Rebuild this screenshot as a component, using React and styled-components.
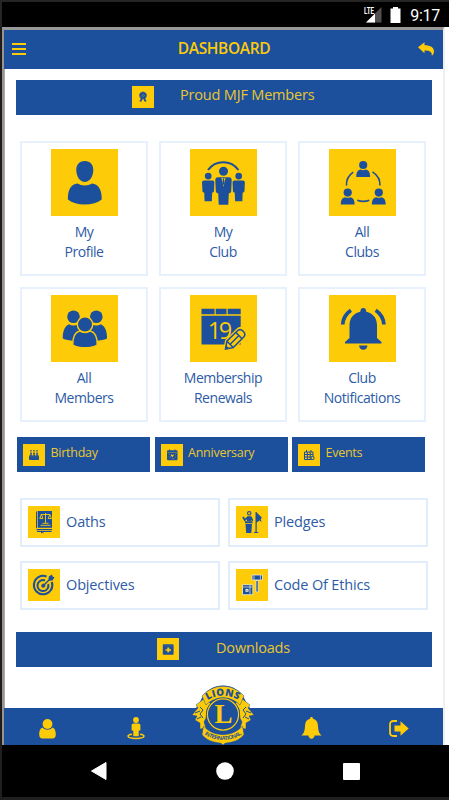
import React from "react";
import styled, { createGlobalStyle } from "styled-components";

const BLUE = "#1c4f9c";
const YELLOW = "#fdcb08";

const GlobalStyle = createGlobalStyle`
  * {
    box-sizing: border-box;
  }
  body {
    margin: 0;
    background-color: #fff;
    font-family: "Open Sans", "Noto Sans", sans-serif;
  }
`;

const ProfileIcon = () => (
  <svg viewBox="0 0 67 67" fill={BLUE}>
    <path d="M33.8 12c5.600 0 8.800 4 8.500 9.500C42 28 38.500 33 33.800 33s-8.200-5-8.500-11.500C25 16 28.200 12 33.800 12z" />
    <path d="M26.500 34.500c4.300 2.600 10.200 2.600 14.500 0 7 .6 10 7.500 9.700 16-4.200 3.300-9.900 5-16.900 5s-12.700-1.700-16.900-5c-.3-8.500 2.600-15.400 9.600-16z" />
  </svg>
);

const Person = ({ x, y, s = 1 }) => (
  <g transform={`translate(${x} ${y}) scale(${s})`}>
    <circle cx="0" cy="0" r="4.500" />
    <path d="M-5.500 6h11c1.700 0 2.800 1.200 2.700 3L7.700 20c-.2 1.500-1.200 2-2.400 2l-.5 11.500h-9.600l-.5-11.500c-1.200 0-2.200-.5-2.400-2L-8.200 9c-.1-1.800 1-3 2.700-3z" />
  </g>
);

const ClubIcon = () => (
  <svg viewBox="0 0 67 67" fill={BLUE}>
    <path d="M18 21c7.500-10.500 23-10.500 30.500 0" fill="none" stroke={BLUE} strokeWidth="2" />
    <Person x={18.2} y={27} s={0.75} />
    <Person x={48.7} y={27} s={0.75} />
    <Person x={33.5} y={22.3} />
    <path d="M31.300 28.300l2.200 9.700 2.200-9.700-1.400 1.200h-1.600z" fill={YELLOW} />
    <path d="M33 29.700h1l.6 4.500-1.100 2-1.100-2z" />
  </svg>
);

const Bust = ({ x, y }) => (
  <g transform={`translate(${x} ${y})`}>
    <circle r="4.100" />
    <path d="M-6.900 11.900c0-4.700 1.600-6.800 4.400-7.300 1.500.8 3.500.8 5 0 2.800.5 4.400 2.600 4.400 7.300z" />
  </g>
);

const ClubsIcon = () => (
  <svg viewBox="0 0 67 67" fill={BLUE}>
    <Bust x={34.2} y={16} />
    <Bust x={18.700} y={43.600} />
    <Bust x={49.800} y={43.600} />
    <g fill="none" stroke={BLUE} strokeWidth="1.600">
      <path d="M17.500 36.500c-.4-5.300 2-10 6.700-13.300" />
      <path d="M43.500 22.800c5 3.200 7.800 8 7.400 13.700" />
      <path d="M28.300 51.300c4 1.500 8 1.500 12 0" />
    </g>
  </svg>
);

const MembersIcon = () => (
  <svg viewBox="0 0 67 67" fill={BLUE}>
    <circle cx="22.500" cy="21.800" r="6.300" />
    <circle cx="45.300" cy="21.800" r="6.300" />
    <path d="M11.800 43.500c-.3-7 2-12.300 6-14.300 3 1.800 6.500 1.800 9.500 0l5 6-4 10c-6.500 1-12.500.2-16.500-1.700z" />
    <path d="M56 43.500c.3-7-2-12.300-6-14.300-3 1.800-6.500 1.800-9.500 0l-5 6 4 10c6.500 1 12.500.2 16.500-1.700z" />
    <g stroke={YELLOW} strokeWidth="1.400">
      <path d="M21.800 50c-.3-7.500 2-12.500 6.800-14 3.400 2 7.400 2 10.800 0 4.800 1.500 7.100 6.500 6.800 14-6.600 3.700-17.800 3.700-24.400 0z" />
      <circle cx="34" cy="29.500" r="7.700" />
    </g>
  </svg>
);

const RenewalIcon = () => (
  <svg viewBox="0 0 67 67" fill={BLUE}>
    <path d="M11.500 13.700h13v5.600h-13zM25.700 13.700h10.800v5.600H25.700zM37.700 13.700h13v5.600h-13zM11.500 20.800h39.200v28.700H11.500z" />
    <text x="28.700" y="43.500" textAnchor="middle" fontSize="23.500" fontWeight="400" fontFamily="Open Sans" letterSpacing="-2.500" fill={YELLOW}>
      19
    </text>
    <g transform="translate(35.500 54) rotate(-45)">
      <path d="M0 0l6.500-4.500h15.500c3 0 4 2 4 4.500s-1 4.500-4 4.500H6.500z" stroke={YELLOW} strokeWidth="4" />
      <path d="M0 0l6.500-4.500h14.500c3 0 4 2 4 4.500s-1 4.500-4 4.500H6.500zM6.500-4.500v9M19-4.500v9M7 0h12" fill={YELLOW} stroke={BLUE} strokeWidth="1.500" />
      <path d="M0 0l3-2v4z" />
    </g>
  </svg>
);

const NoticeIcon = () => (
  <svg viewBox="0 0 67 67" fill={BLUE}>
    <path d="M34.300 13c1.900 0 3 1.400 3 3.800 7 1.700 10.700 6.500 10.700 13.400V43l4.500 4v1.500H16V47l4.500-4V30.200c0-6.900 3.800-11.700 10.800-13.400 0-2.400 1.100-3.800 3-3.800zM30 50.500h8.500c-.3 2.700-1.900 4.300-4.200 4.300s-4-1.600-4.300-4.300z" />
    <g fill="none" stroke={BLUE} strokeWidth="3.700">
      <path d="M13.700 29.500c.3-6 3.200-10.800 8.200-14.300" />
      <path d="M54.900 29.500c-.3-6-3.200-10.800-8.200-14.300" />
    </g>
  </svg>
);

const RosetteIcon = () => (
  <svg viewBox="0 0 22 22" fill={BLUE}>
    <circle cx="11" cy="9.500" r="3.400" stroke={BLUE} strokeDasharray="1 .6" />
    <path d="M9.300 10.300l2.500-2.500M10.500 11.300l2.300-2.300" stroke="#9a9654" strokeWidth=".7" />
    <path d="M9 12l1.500 1-1.300 3-.9-.8-1 .2zM13 12l-1.500 1 1.300 3 .9-.8 1 .2z" />
  </svg>
);

const CakeIcon = () => (
  <svg viewBox="0 0 22 22" fill={BLUE}>
    <path d="M6 11.500h10v3.700q0 .8-.8.800H6.800q-.8 0-.8-.8zM7.300 8.500h1.500V12H7.300zM10.300 8.500h1.500V12h-1.500zM13.300 8.500h1.500V12h-1.500zM7.300 6h1.300v1.400H7.300zM10.300 6h1.300v1.400h-1.300zM13.300 6h1.300v1.400h-1.300z" />
    <path d="M6 12.300c1.500 1.500 2.500 0 3.300 0s1.800 1.500 3.400 0 2 .8 3.300 0" fill="none" stroke="#4c6a68" strokeWidth=".5" />
  </svg>
);

const DateIcon = () => (
  <svg viewBox="0 0 22 22" fill={BLUE}>
    <rect x="6" y="6.300" width="10.500" height="10" rx="1" />
    <path d="M6.500 8.500h9.500M8 10.500h1M8 13h2M14 10.500h1M14 13h1M10.500 14.700h3" stroke="#8c8d56" strokeWidth=".7" />
    <path d="M11.300 13.200l-1.400-1.700c-.4-1 .8-1.500 1.400-.5.600-1 1.800-.5 1.400.5z" fill={YELLOW} />
    <path d="M8.500 5.500v2M14 5.500v2" stroke={BLUE} />
  </svg>
);

const EventIcon = () => (
  <svg viewBox="0 0 22 22" fill="none" stroke={BLUE}>
    <path d="M6.500 8h8.500v7.500H6.500zM6.500 10.500H15M6.500 13H15M9.300 8v7.500M12.200 8v7.500M8.500 6v2M13 6v2" />
    <circle cx="14.500" cy="14" r="1.600" fill={YELLOW} />
  </svg>
);

const DownloadIcon = () => (
  <svg viewBox="0 0 22 22" fill={BLUE}>
    <rect x="5.800" y="6.200" width="10.800" height="10.600" rx=".8" />
    <path d="M6.500 7.800h9.500" stroke="#496c85" strokeWidth=".7" />
    <path d="M10.300 9.500h2v1.700h1.700v1.500h-1.700v1.500h-2v-1.500H8.500v-1.500h1.800z" fill={YELLOW} />
  </svg>
);

const OathIcon = () => (
  <svg viewBox="0 0 32 32" fill={BLUE}>
    <path d="M10 5h14v16.700H10zM8 6.500q0-1.300 1.300-1.500v16.500L8 22.300z" />
    <path d="M8.500 23.600H24M9 25.500h14.500" stroke={BLUE} strokeWidth="1.200" />
    <path d="M13 25.500v2l1.300-1 1.200 1v-2z" />
    <g fill="none" stroke={YELLOW} strokeWidth=".9">
      <path d="M17.500 7v10M12.800 8.500h9.400M13.300 8.500l-1.500 4h3.200zM21.800 8.500l-1.600 4h3.200zM14.500 17.300h6M12.500 19.300h10" />
    </g>
  </svg>
);

const TargetIcon = () => (
  <svg viewBox="0 0 32 32" fill="none" stroke={BLUE}>
    <path d="M18.500 7.500A9.200 9.200 0 1 0 23.800 13" strokeWidth="2.100" />
    <path d="M17 11.500a5.500 5.500 0 1 0 3.200 3.500" strokeWidth="2" />
    <circle cx="15.300" cy="16.700" r="1.600" fill={BLUE} />
    <path d="M15.500 16.500l9-9" strokeWidth="1.500" />
    <path d="M20.500 10.500l.3-3L24 5.500l.5 2.200 2 .5-2 3.200-3 .3z" fill={BLUE} stroke="none" />
  </svg>
);

const PledgeIcon = () => (
  <svg viewBox="0 0 32 32" fill={BLUE}>
    <path d="M9 15.300h7.500v2H9zM9.500 18h6.500l-.7 9h-5.100z" />
    <circle cx="13.200" cy="7.300" r="1.700" fill={YELLOW} stroke={BLUE} strokeWidth="1.100" />
    <path d="M7 11l1.800 3.200 3-3h3l1.800 3.600" fill="none" stroke={BLUE} strokeWidth="1.700" />
    <path d="M11 11h4v4h-4zM19.500 6h1.200v20.500h-1.200zM20.700 6.500l5.300 5.300-1.300 1.300.8 3-2-1.600-2.800 2z" />
    <path d="M18 26.500h4.200" stroke={BLUE} />
  </svg>
);

const EthicsIcon = () => (
  <svg viewBox="0 0 32 32" fill={BLUE}>
    <g stroke="#f4efd0" strokeWidth=".8">
      <path d="M16 6h10.500v5H16zM20 11.500h2.200V23H20zM6.500 15.700h10.300v10H6.500z" />
    </g>
    <path d="M7 18h9M14 16v9.500M18 6.300v4.400M24.400 6.300v4.400" stroke="#f4efd0" strokeWidth=".7" />
    <path d="M9.500 20h3v2.800h-3z" fill="#f4efd0" />
    <path d="M10.500 21h1v.8h-1z" />
  </svg>
);

const MenuIcon = () => (
  <svg width="14" height="12" viewBox="0 0 14 12" fill={YELLOW}>
    <path d="M0 0h14v2H0zM0 5h14v2H0zM0 10h14v2H0z" />
  </svg>
);

const ReplyIcon = () => (
  <svg width="17" height="14" viewBox="0 0 17 14" fill={YELLOW}>
    <path d="M0 5.300L6.500.2v3c6 0 9.500 2.300 9.500 6 0 2-.8 3.500-2.200 4.500.3-3.800-1.600-5.300-7.300-5.300v2.800z" />
  </svg>
);

const LionsLogo = () => (
  <svg width="64" height="60" viewBox="0 0 64 60" fontFamily="Open Sans">
    <path d="M9 17C14 4 24 .5 32 .5S50 4 55 17l8 12-6 14c-5 10-14 14-25 16C21 57 12 53 7 43L1 29z" fill={BLUE} />
    <g fill={YELLOW} stroke={BLUE} strokeWidth=".5">
      <path d="M14 13l-9 7 2 3-6 7 5 1-2 4 5 3 0 6 6-1-2-6 2-4 1-9 4-5z" />
      <path d="M50 13l9 7-2 3 6 7-5 1 2 4-5 3 0 6-6-1 2-6-2-4-1-9-4-5z" />
      <path d="M11 11C23-2 41-2 53 11l-4 9C40 10.500 24 10.500 15 20z" />
      <path d="M12.500 41c10 11.500 29 11.500 39 0l1.500 8.500c-4 5.500-11 8-19 8.700l-2 1.800-2-1.800c-8-.7-15-3.200-19-8.700z" />
    </g>
    <path d="M4 28l5-2M6 34l4-2M9 22l3 3-3 4 3 4M60 28l-5-2M58 34l-4-2M55 22l-3 3 3 4-3 4" stroke={BLUE} strokeWidth="1" fill="none" />
    <circle cx="32" cy="29.500" r="17" fill={BLUE} />
    <circle cx="32" cy="29.500" r="15.600" fill="none" stroke={YELLOW} strokeWidth="1.200" />
    <text x="32.600" y="38.200" textAnchor="middle" fontFamily="Liberation Serif" fontSize="27" fontWeight="700" fill={YELLOW}>
      L
    </text>
    <path id="logoTop" d="M13 18.200C23 8.200 41 8.200 51 18.200" fill="none" />
    <path id="logoBottom" d="M11.500 47.500c10 10 31 10 41 0" fill="none" />
    <text fontSize="9.800" fontWeight="800" fill={BLUE} textAnchor="middle" letterSpacing=".3">
      <textPath href="#logoTop" startOffset="50%">LIONS</textPath>
    </text>
    <text fontFamily="Liberation Sans Narrow, Liberation Sans" fontSize="5.600" fontWeight="700" fill={BLUE} textAnchor="middle" letterSpacing="-.45">
      <textPath href="#logoBottom" startOffset="50%">INTERNATIONAL</textPath>
    </text>
  </svg>
);

const UserTab = () => (
  <svg width="17" height="20" viewBox="0 0 17 20" fill={YELLOW}>
    <circle cx="8.500" cy="5" r="4.900" />
    <path d="M3.500 8.500c3 3 7 3 10 0 2.500.7 3.300 4 3.300 7 0 2.800-1.200 3.900-3.200 3.900H3.400C1.400 19.400.2 18.300.2 15.500c0-3 .8-6.300 3.300-7z" />
  </svg>
);

const StreetTab = () => (
  <svg width="18" height="23" viewBox="0 0 18 23" fill={YELLOW}>
    <circle cx="9" cy="3" r="2.900" />
    <path d="M6.500 6.500h5c1.200 0 1.900.8 1.900 2v5h-1.700v5.700H6.300v-5.700H4.600v-5c0-1.200.7-2 1.900-2z" />
    <path d="M5 17.200c-2.500.3-4 1-4 1.900 0 1.400 3.500 2.400 8 2.400s8-1 8-2.400c0-.9-1.500-1.600-4-1.900" fill="none" stroke={YELLOW} strokeWidth="1.500" />
  </svg>
);

const BellTab = () => (
  <svg width="21" height="23" viewBox="0 0 21 23" fill={YELLOW}>
    <path d="M10.500 0c.9 0 1.500.6 1.500 1.700 3.500.9 4.800 3.500 5 7.300.2 5 1.200 7.500 3.700 9.500H.3C2.800 16.500 3.800 14 4 9c.2-3.800 1.500-6.400 5-7.300C9 .6 9.600 0 10.500 0zM7.500 18.200h6c0 2-1.300 3.500-3 3.500s-3-1.500-3-3.500z" />
  </svg>
);

const ExitTab = () => (
  <svg width="20" height="17" viewBox="0 0 20 17" fill={YELLOW}>
    <path d="M8 1H4.500C2.200 1 1 2.200 1 4.500v8C1 14.800 2.200 16 4.500 16H8" fill="none" stroke={YELLOW} strokeWidth="1.800" />
    <path d="M5.500 5.500h6V1.300L19.700 8.500l-8.200 7.200v-4.200h-6z" />
  </svg>
);

const tiles = [
  { lines: ["My", "Profile"], icon: <ProfileIcon /> },
  { lines: ["My", "Club"], icon: <ClubIcon /> },
  { lines: ["All", "Clubs"], icon: <ClubsIcon /> },
  { lines: ["All", "Members"], icon: <MembersIcon /> },
  { lines: ["Membership", "Renewals"], icon: <RenewalIcon /> },
  { lines: ["Club", "Notifications"], icon: <NoticeIcon /> },
];

const dates = [
  { name: "Birthday", icon: <CakeIcon /> },
  { name: "Anniversary", icon: <DateIcon /> },
  { name: "Events", icon: <EventIcon /> },
];

const links = [
  { name: "Oaths", icon: <OathIcon /> },
  { name: "Pledges", icon: <PledgeIcon /> },
  { name: "Objectives", icon: <TargetIcon /> },
  { name: "Code Of Ethics", icon: <EthicsIcon /> },
];

const App = () => {
  return (
    <Device>
      <GlobalStyle />
      <StatusBar>
        <Signal>
          <Lte>LTE</Lte>
          <svg width="16" height="16" viewBox="0 0 16 16">
            <path d="M15.500 0v15.500H0z" fill="#505050" />
            <path d="M9 6.500v9H0z" fill="#fff" />
          </svg>
        </Signal>
        <Battery width="11" height="16" viewBox="0 0 11 16">
          <path d="M3 0h5v1.600h2.500V16H.5V1.600H3z" fill="#fff" />
        </Battery>
        <Clock>9:17</Clock>
      </StatusBar>
      <Screen>
        <Header>
          <MenuIcon />
          <Title>DASHBOARD</Title>
          <ReplyIcon />
        </Header>
        <Content>
          <Banner $indent={116} $gap={26}>
            <SmallIcon><RosetteIcon /></SmallIcon>
            <span>Proud MJF Members</span>
          </Banner>
          <TileGrid>
            {tiles.map((tile) => (
              <Tile key={tile.lines.join(" ")}>
                <TileIcon>{tile.icon}</TileIcon>
                <TileName>
                  {tile.lines[0]}
                  <br />
                  {tile.lines[1]}
                </TileName>
              </Tile>
            ))}
          </TileGrid>
          <DateRow>
            {dates.map((item) => (
              <DateButton key={item.name}>
                <SmallIcon>{item.icon}</SmallIcon>
                <span>{item.name}</span>
              </DateButton>
            ))}
          </DateRow>
          <LinkGrid>
            {links.map((item) => (
              <LinkCard key={item.name}>
                <LinkIcon>{item.icon}</LinkIcon>
                <span>{item.name}</span>
              </LinkCard>
            ))}
          </LinkGrid>
          <Banner $indent={141} $gap={37} $line={20}>
            <SmallIcon><DownloadIcon /></SmallIcon>
            <span>Downloads</span>
          </Banner>
        </Content>
        <TabBar>
          <Tab><UserTab /></Tab>
          <Tab><StreetTab /></Tab>
          <Tab><Logo><LionsLogo /></Logo></Tab>
          <Tab><BellTab /></Tab>
          <Tab><ExitTab /></Tab>
        </TabBar>
      </Screen>
      <NavBar>
        <svg width="16" height="18" viewBox="0 0 16 18"><path d="M15 .5v17L.5 9z" fill="#fff" stroke="#fff" strokeLinejoin="round" /></svg>
        <svg width="18" height="18" viewBox="0 0 18 18"><circle cx="9" cy="9" r="8.800" fill="#fff" /></svg>
        <svg width="17" height="17" viewBox="0 0 17 17"><rect width="17" height="17" rx="1" fill="#fff" /></svg>
      </NavBar>
    </Device>
  );
};

const Device = styled.div`
  display: flex;
  flex-direction: column;
  width: 449px;
  height: 800px;
  overflow: hidden;
  border-top: 2px solid #252525;
  border-bottom: 3px solid #201f1f;
  background-color: #fff;
`;

const StatusBar = styled.div`
  display: flex;
  align-items: center;
  justify-content: flex-end;
  height: 25px;
  padding-right: 9px;
  border-left: 2px solid #252525;
  background-color: #000;
  color: #fff;
`;

const Signal = styled.div`
  position: relative;
  height: 16px;
  margin-right: 8px;
  svg {
    display: block;
  }
`;

const Lte = styled.span`
  position: absolute;
  left: -2px;
  top: -1px;
  font-family: Roboto, sans-serif;
  font-size: 9.5px;
  font-weight: 700;
  line-height: 9px;
  transform: scaleX(0.65);
  transform-origin: left;
`;

const Battery = styled.svg`
  margin-right: 9px;
`;

const Clock = styled.span`
  font-family: Roboto, sans-serif;
  font-size: 16px;
  line-height: 24px;
  letter-spacing: -0.3px;
  padding-top: 2px;
`;

const Screen = styled.div`
  display: flex;
  flex-direction: column;
  width: 444px;
  height: 718px;
  border-left: 4px solid #989390;
  border-top: 3px solid #999;
  box-shadow: inset 1px 0 #aaa, 1px 0 #eee;
  border-right: 1px solid #f0f0f0;
  position: relative;
  &::before {
    content: "";
    position: absolute;
    left: -4px;
    top: -3px;
    bottom: 0;
    width: 2px;
    background-color: #1f1b1b;
  }
`;

const Header = styled.header`
  display: flex;
  align-items: center;
  justify-content: space-between;
  height: 39px;
  padding: 0 8px;
  background-color: ${BLUE};
  color: ${YELLOW};
  & > svg {
    position: relative;
    top: -1px;
  }
`;

const Title = styled.h1`
  margin: 0 0 0 4px;
  padding-bottom: 3px;
  font-size: 15.5px;
  font-weight: 600;
  letter-spacing: -0.35px;
`;

const Content = styled.main`
  height: 639px;
  padding: 11px 11px 0 12px;
`;

const Banner = styled.div`
  display: flex;
  align-items: flex-start;
  height: 34.5px;
  padding: 6px 0 0 ${(props) => props.$indent}px;
  background-color: ${BLUE};
  color: #e9c72d;
  font-size: 14.5px;
  line-height: ${(props) => props.$line || 18}px;
  letter-spacing: -0.18px;
  & > span {
    margin-left: ${(props) => props.$gap}px;
  }
`;

const SmallIcon = styled.div`
  flex: none;
  width: 22px;
  height: 22px;
  background-color: ${YELLOW};
  svg {
    display: block;
  }
`;

const TileGrid = styled.div`
  display: grid;
  grid-template-columns: repeat(3, 128px);
  grid-auto-rows: 135px;
  gap: 11px;
  margin: 26.5px 0 0 4px;
`;

const Tile = styled.div`
  display: flex;
  flex-direction: column;
  align-items: center;
  padding-top: 6px;
  border: 2px solid #e7f0fd;
  background-color: #fff;
`;

const TileIcon = styled.div`
  width: 67px;
  height: 67px;
  background-color: ${YELLOW};
  svg {
    display: block;
  }
`;

const TileName = styled.p`
  margin: 6px 0 0;
  color: #2d5ba6;
  font-size: 14px;
  line-height: 20px;
  letter-spacing: -0.45px;
  text-align: center;
  white-space: nowrap;
`;

const DateRow = styled.div`
  display: grid;
  grid-template-columns: repeat(3, 133px);
  gap: 4.5px;
  margin: 15px 0 0 1px;
`;

const DateButton = styled.div`
  display: flex;
  height: 35px;
  padding: 7px 0 0 6px;
  background-color: ${BLUE};
  color: #e9c72d;
  font-size: 12.5px;
  line-height: 17px;
  letter-spacing: -0.25px;
  & > span {
    margin-left: 5.5px;
  }
`;

const LinkGrid = styled.div`
  display: grid;
  grid-template-columns: repeat(2, 200px);
  grid-auto-rows: 49px;
  gap: 14px 8px;
  margin: 26px 0 22px 4px;
`;

const LinkCard = styled.div`
  display: flex;
  padding: 6px 0 0 6px;
  border: 2px solid #e2edfc;
  color: #2d5ba6;
  font-size: 14.5px;
  line-height: 31px;
  letter-spacing: -0.15px;
  & > span {
    margin-left: 6px;
  }
`;

const LinkIcon = styled.div`
  width: 32px;
  height: 32px;
  background-color: ${YELLOW};
  svg {
    display: block;
  }
`;

const TabBar = styled.footer`
  display: grid;
  grid-template-columns: repeat(5, 1fr);
  height: 37px;
  background-color: ${BLUE};
`;

const Tab = styled.div`
  display: flex;
  align-items: center;
  justify-content: center;
  position: relative;
  height: 41px;
  svg {
    display: block;
  }
`;

const Logo = styled.div`
  position: absolute;
  left: 50%;
  bottom: 4px;
  transform: translateX(-50%);
  svg {
    overflow: visible;
  }
`;

const NavBar = styled.nav`
  display: flex;
  align-items: center;
  justify-content: center;
  gap: 109px;
  height: 52px;
  border-left: 2px solid #201f1f;
  background-color: #000;
`;

export default App;
